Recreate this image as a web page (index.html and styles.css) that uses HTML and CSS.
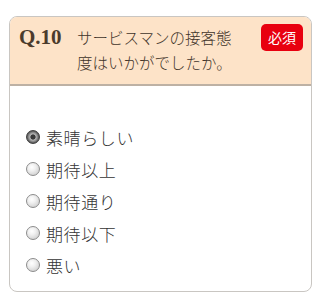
FILE: index.html
```html
<!DOCTYPE html>
<html lang="ja">
<head>
<meta charset="utf-8">
<link rel="stylesheet" href="styles.css">
</head>
<body>
<div class="card">
  <div class="head">
    <span class="qno">Q.10</span>
    <span class="qtext">サービスマンの接客態度はいかがでしたか。</span>
    <span class="badge">必須</span>
  </div>
  <div class="body">
    <label class="opt"><span class="radio checked"></span><span class="lbl">素晴らしい</span></label>
    <label class="opt"><span class="radio"></span><span class="lbl">期待以上</span></label>
    <label class="opt"><span class="radio"></span><span class="lbl">期待通り</span></label>
    <label class="opt"><span class="radio"></span><span class="lbl">期待以下</span></label>
    <label class="opt"><span class="radio"></span><span class="lbl">悪い</span></label>
  </div>
</div>
</body>
</html>
```
FILE: styles.css
```css
html, body { margin: 0; padding: 0; background: #fff; }
body { font-family: "Liberation Serif", "Noto Sans CJK JP", serif; }
.card {
  box-sizing: border-box;
  width: 303px;
  margin: 16px 0 0 9px;
  border: 1px solid #c9c6c2;
  border-radius: 8px;
  overflow: hidden;
}
.head {
  background: #fde3c8;
  border-bottom: 2px solid #bdb1a4;
  display: flex;
  align-items: flex-start;
  padding: 8px 8px 9px 9px;
  height: 50px;
}
.qno {
  font-family: "Liberation Serif", serif;
  font-weight: bold;
  font-size: 21px;
  color: #4b3b2c;
  line-height: 25px;
  width: 58px;
  flex: none;
}
.qtext {
  font-family: "Noto Sans CJK JP", sans-serif;
  font-weight: 300;
  font-size: 15.5px;
  line-height: 25px;
  color: #3f342a;
  flex: 1;
  padding-right: 16px;
}
.badge {
  flex: none;
  background: #e8000f;
  color: #fff;
  font-family: "Noto Sans CJK JP", sans-serif;
  font-size: 14px;
  line-height: 27px;
  padding: 0 7px;
  border-radius: 5px;
  margin-top: -1px;
}
.body {
  padding: 35px 0 10px 16px;
  display: flex;
  flex-direction: column;
}
.opt {
  display: flex;
  align-items: center;
  height: 32px;
}
.radio {
  box-sizing: border-box;
  width: 14px;
  height: 14px;
  border-radius: 50%;
  border: 1px solid #8c8c8c;
  background: radial-gradient(circle at 40% 35%, #ffffff 0, #f0f0f0 35%, #c4c4c4 100%);
  margin-right: 6px;
  flex: none;
}
.radio.checked {
  border: 1px solid #3e3e3e;
  background: radial-gradient(circle, #3a3a3a 0 2.2px, #b8b8b8 3px, #8a8a8a 4.5px, #555 6px);
}
.lbl {
  font-family: "Noto Sans CJK JP", sans-serif;
  font-weight: 300;
  font-size: 17px;
  color: #333;
  letter-spacing: 0.6px;
}
```
